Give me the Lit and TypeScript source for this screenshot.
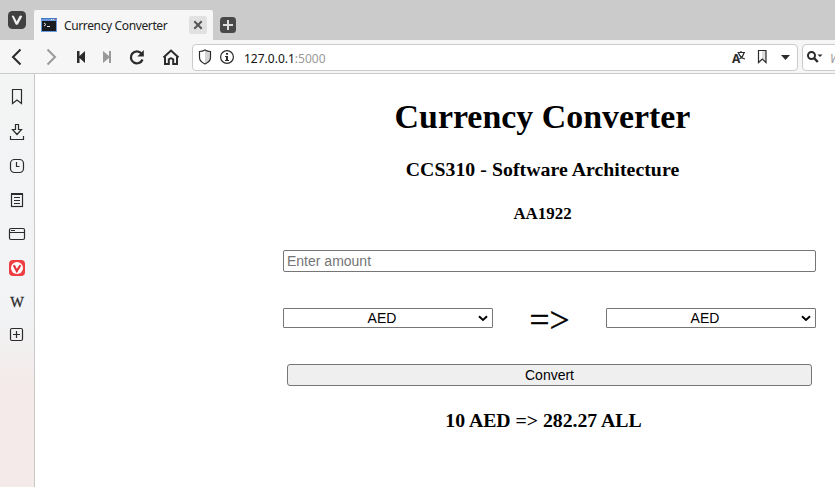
import { LitElement, html, css, svg } from "lit";
import { customElement, property } from "lit/decorators.js";

const vMark = svg`<path d="M11.800 16.300q.9-1.500 2.200 0l2.700 5.100 2.700-5.200q1.500-1.500 2.800.3L18.100 24q-1.400 1.700-2.700 0z" fill="#eee"/>`;

const panels = [
  svg`<path d="M12.500 89.500h9v14l-4.500-3.500-4.500 3.500z"/>`,
  svg`<path d="M15.500 124.500h3v5h3l-4.500 5-4.500-5h3zM10.500 136v3.500h13v-3.500"/>`,
  svg`<rect x="10.500" y="159.500" width="13" height="13" rx="4"/><path d="M16.500 162v4.500h3"/>`,
  svg`<rect x="11.500" y="194" width="11" height="12.500"/><path d="M11 194h12" stroke-width="2"/><path d="M14 197.500h6M14 200.500h6M14 203.500h6"/>`,
  svg`<rect x="9.500" y="228.500" width="15" height="11" rx="1.500"/><path d="M10 232.500h14M11 230.500h4"/>`,
  svg`<rect x="9" y="260" width="16" height="16" rx="4" fill="#ef3e42" stroke="none"/><circle cx="17" cy="268" r="6" fill="#fff" stroke="none"/><path d="M14.200 266l2.600 5 3.100-5" stroke="#e33338" stroke-width="2.200" stroke-linecap="round"/>`,
  svg`<text class="wiki" x="17" y="307" text-anchor="middle">W</text>`,
  svg`<rect x="10.500" y="328.500" width="12" height="12" rx="1.500"/><path d="M16.500 331v7M13 334.500h7"/>`,
];

@customElement("tab-strip")
export class TabStrip extends LitElement {
  static styles = css`
    :host { display: flex; height: 40px; background: #cbcbcb; }
    svg { display: block; flex: none; }
    .tab { display: flex; align-items: center; box-sizing: border-box; width: 179px; height: 30px; margin-top: 10px; padding: 0 6px 0 7px; background: #f6f6f6; border-radius: 2px 2px 0 0; }
    .title { flex: 1; margin-left: 7px; padding-top: 1px; font: 12px/18px "Noto Sans", sans-serif; letter-spacing: -.37px; color: #222; white-space: nowrap; }
    .close { display: grid; place-items: center; width: 18px; height: 18px; border-radius: 2px; background: #e1e1e1; }
  `;
  render() {
    return html`
      <svg width="34" height="40"><rect x="8" y="11" width="18" height="18" rx="4.500" fill="#414141"/>${vMark}</svg>
      <div class="tab">
        <svg width="16" height="14"><rect width="16" height="14" fill="#6c9be0"/><path d="M0 .5h16" stroke="#4777c0"/><path d="M10 1.500h1M12 1.500h1" stroke="#dce9ff"/><path d="M14 1.500h1" stroke="#d34c3f"/><rect x="1" y="3" width="14" height="10" fill="#181b20"/><path d="M3 5l2 1.500-2 1.500M6 8.500h3" fill="none" stroke="#e8e8e8"/></svg>
        <span class="title">Currency Converter</span>
        <span class="close"><svg width="18" height="18"><path d="M5.300 5.300l7.400 7.400M12.700 5.300l-7.400 7.400" stroke="#555" stroke-width="2"/></svg></span>
      </div>
      <svg width="30" height="40"><rect x="7" y="17" width="16" height="16" rx="3.500" fill="#484848"/><path d="M15 20v10M10 25h10" stroke="#ddd" stroke-width="2"/></svg>`;
  }
}

@customElement("address-bar")
export class AddressBar extends LitElement {
  static styles = css`
    :host { display: flex; box-sizing: border-box; height: 34px; overflow: hidden; background: #f6f6f6; border-bottom: 1px solid #cbcbcb; color: #2b2b2b; }
    svg { display: block; flex: none; fill: none; stroke: currentColor; }
    .field { display: flex; flex: none; box-sizing: border-box; height: 27px; margin-top: 4px; border: 1px solid #cbcbcb; border-radius: 4px; background: #fff; overflow: hidden; }
    .url { width: 606px; }
    .search { width: 200px; margin-left: 4px; }
    .address { flex: 1; font: 12px/27px "Noto Sans", sans-serif; color: #111; }
    .port { color: #999; }
    .latin { font: bold 12px "Noto Sans", sans-serif; fill: currentColor; stroke: none; }
    .hint { font: italic 12px/27px "Noto Sans", sans-serif; color: #999; }
  `;
  render() {
    return html`
      <svg width="192" height="33" viewBox="0 40 192 33">
        <path d="M20.500 49.500L13 57l7.500 7.500" stroke-width="2"/>
        <path d="M47.500 49.500L55 57l-7.500 7.500" stroke-width="2" stroke="#999"/>
        <path d="M77 51h2.500v5l5.500-5v12l-5.500-5v5H77z" fill="currentColor" stroke="none"/>
        <path d="M111 51h-2v5l-6-5v12l6-5v5h2z" fill="#999" stroke="none"/>
        <path d="M141.500 53.500a6 6 0 1 0 1 6" stroke-width="2.300"/><path d="M143.800 50v6.500h-6.500z" fill="currentColor" stroke="none"/>
        <path d="M163.500 57.500l7.500-7 7.500 7M165 57v7h3.800v-4.500q2.200-2.500 4.400 0V64h3.800v-7" stroke-width="2"/>
      </svg>
      <div class="field url">
        <svg width="51" height="25" viewBox="193 45 51 25">
          <path d="M205 50.500l6 2v5q0 4-6 6.500z" fill="#d4d4d4" stroke="none"/>
          <path d="M205 50q-2.500 1.500-5.500 1.500v6q0 4 5.500 6.500 5.500-2.500 5.500-6.500v-6q-3 0-5.500-1.500z" stroke-width="1.200"/>
          <circle cx="227" cy="57" r="6.400" stroke-width="1.200"/><path d="M227 53v1.800M227 56v5" stroke-width="2"/><path d="M225 56.500h2M225 60.500h4"/>
        </svg>
        <span class="address">127.0.0.1<span class="port">:5000</span></span>
        <svg width="70" height="25" viewBox="727 45 70 25">
          <text class="latin" x="732" y="62.500">A</text>
          <path d="M737.500 52.500h7.500M741 51v2M738.500 53q2 5 6.500 6M744 53q-1 4-4.500 6" stroke-width="1.200"/>
          <path d="M762 51h4v10l-4-3z" fill="#ddd" stroke="none"/><path d="M758.500 50.500h7.500v12l-3.750-3.500-3.750 3.500z" stroke-width="1.200"/>
          <path d="M781 55h9l-4.500 5z" fill="currentColor" stroke="none"/>
        </svg>
      </div>
      <div class="field search">
        <svg width="27" height="25" viewBox="803 45 27 25">
          <circle cx="811.500" cy="55.500" r="3.500" stroke-width="2"/><path d="M814 58l3.800 4" stroke-width="2.500"/>
          <path d="M817.500 54.500h5l-2.500 2.500z" fill="currentColor" stroke="none"/>
        </svg>
        <span class="hint">Wikipedia</span>
      </div>`;
  }
}

@customElement("side-panel")
export class SidePanel extends LitElement {
  static styles = css`
    :host { display: flex; flex-direction: column; flex: none; box-sizing: border-box; width: 35px; padding-top: 7px; border-right: 1px solid #c8c8c8; color: #2b2b2b; background: linear-gradient(#f3f4f4 0, #f1f3f5 240px, #f3eeee 285px, #f4eae9 315px); }
    svg { display: block; fill: none; stroke: currentColor; stroke-width: 1.2; }
    .wiki { font: 14.5px "Liberation Serif", serif; fill: currentColor; stroke-width: .3; }
  `;
  render() {
    return panels.map((icon, i) => html`<svg width="34" height="34" viewBox="0 ${81 + i * 34} 34 34">${icon}</svg>`);
  }
}

@customElement("currency-select")
export class CurrencySelect extends LitElement {
  @property() value = "AED";
  static styles = css`
    :host { display: flex; align-items: center; box-sizing: border-box; width: 210px; height: 20px; border: 1px solid #767676; border-radius: 1px; background: #fff; font: 14px/18px "Liberation Sans", Arial, sans-serif; color: #000; }
    .value { flex: 1; padding-left: 2px; text-align: center; }
    svg { flex: none; margin-right: 4px; }
  `;
  render() {
    return html`<span class="value">${this.value}</span>
      <svg width="10" height="7"><path d="M1 1.300l4 3.700 4-3.700" fill="none" stroke="#000" stroke-width="2"/></svg>`;
  }
}

@customElement("converter-page")
export class ConverterPage extends LitElement {
  static styles = css`
    :host { display: flex; flex: 1; flex-direction: column; align-items: center; box-sizing: border-box; padding: 23px 11px 0 226px; background: #fff; color: #000; font-family: "Liberation Serif", "Times New Roman", serif; }
    h1, h3, h4 { margin: 0; white-space: nowrap; }
    h1 { font-size: 33.9px; line-height: 40px; }
    h3 { font-size: 19.8px; line-height: 24px; letter-spacing: .05px; }
    h4 { font-size: 16.9px; line-height: 20px; }
    .course { margin-top: 20px; }
    .code { margin-top: 23px; }
    .form { display: flex; flex-direction: column; align-items: center; width: 533px; margin: 26px 0 0 14px; }
    .amount, .convert { box-sizing: border-box; height: 22px; border: 1px solid #767676; font: 14px/20px "Liberation Sans", Arial, sans-serif; }
    .amount { width: 533px; margin: 0; padding: 0 3px; border-radius: 2px; background: #fff; }
    .amount::placeholder { color: #757575; }
    .pair { display: flex; justify-content: space-between; align-items: center; width: 533px; height: 40px; margin-top: 26px; }
    .arrow { font-size: 35.5px; font-weight: 400; line-height: 36px; padding-top: 4px; -webkit-text-stroke: .4px #000; }
    .convert { width: 525px; margin-top: 26px; padding: 0; border-radius: 3px; background: #efefef; color: #000; }
    .result { margin: 22px 0 0 2px; letter-spacing: -.02px; }
  `;
  render() {
    return html`
      <h1>Currency Converter</h1>
      <h3 class="course">CCS310 - Software Architecture</h3>
      <h4 class="code">AA1922</h4>
      <div class="form">
        <input class="amount" placeholder="Enter amount">
        <div class="pair">
          <currency-select value="AED"></currency-select>
          <span class="arrow">=&gt;</span>
          <currency-select value="AED"></currency-select>
        </div>
        <button class="convert">Convert</button>
      </div>
      <h3 class="result">10 AED =&gt; 282.27 ALL</h3>`;
  }
}

@customElement("app-root")
export class AppRoot extends LitElement {
  static styles = css`
    :host { display: flex; flex-direction: column; width: 835px; height: 487px; overflow: hidden; background: #fff; }
    .body { display: flex; flex: 1; min-height: 0; }
  `;
  render() {
    return html`<tab-strip></tab-strip><address-bar></address-bar>
      <div class="body"><side-panel></side-panel><converter-page></converter-page></div>`;
  }
}
